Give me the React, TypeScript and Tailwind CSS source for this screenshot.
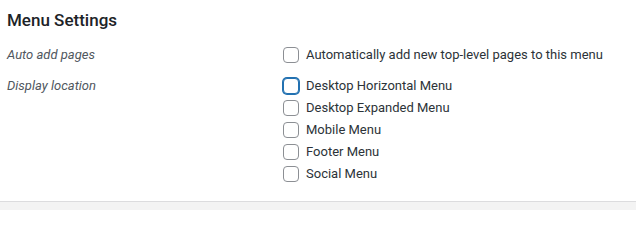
import React from "react";

const locations = [
  { id: "primary", label: "Desktop Horizontal Menu", focused: true },
  { id: "expanded", label: "Desktop Expanded Menu" },
  { id: "mobile", label: "Mobile Menu" },
  { id: "footer", label: "Footer Menu" },
  { id: "social", label: "Social Menu" },
];

function Checkbox({ focused = false }: { focused?: boolean }) {
  return (
    <span
      className={
        focused
          ? "block h-[16px] w-[16px] shrink-0 rounded-[4px] border border-[#2271b1] bg-white shadow-[0_0_0_1px_#2271b1]"
          : "block h-[16px] w-[16px] shrink-0 rounded-[4px] border border-[#8c8f94] bg-white"
      }
    />
  );
}

export default function App() {
  return (
    <div
      className="flex h-[210px] w-[636px] flex-col bg-white text-[13px] text-[#1d2327]"
      style={{ fontFamily: "Roboto, 'Noto Sans', Arial, sans-serif" }}
    >
      <div className="flex-1 pl-[7px]">
        {/* Heading */}
        <h3 className="pt-[9px] text-[17px] font-medium leading-[22px] text-[#1d2327]">Menu Settings</h3>

        {/* Auto add pages */}
        <div className="mt-[13px] flex">
          <div className="w-[276px] italic leading-[22px] text-[#50575e]">Auto add pages</div>
          <label className="flex h-[22px] items-center gap-[7px] text-[#2c3338]">
            <Checkbox />
            Automatically add new top-level pages to this menu
          </label>
        </div>

        {/* Display location */}
        <div className="mt-[9px] flex">
          <div className="w-[276px] italic leading-[22px] text-[#50575e]">Display location</div>
          <div className="flex flex-col">
            {locations.map((loc) => (
              <label key={loc.id} className="flex h-[22px] items-center gap-[7px] text-[#2c3338]">
                <Checkbox focused={loc.focused} />
                {loc.label}
              </label>
            ))}
          </div>
        </div>
      </div>

      {/* Footer strip */}
      <div className="h-[9px] border-t border-[#dcdcde] bg-[#f3f3f3]" />
    </div>
  );
}
